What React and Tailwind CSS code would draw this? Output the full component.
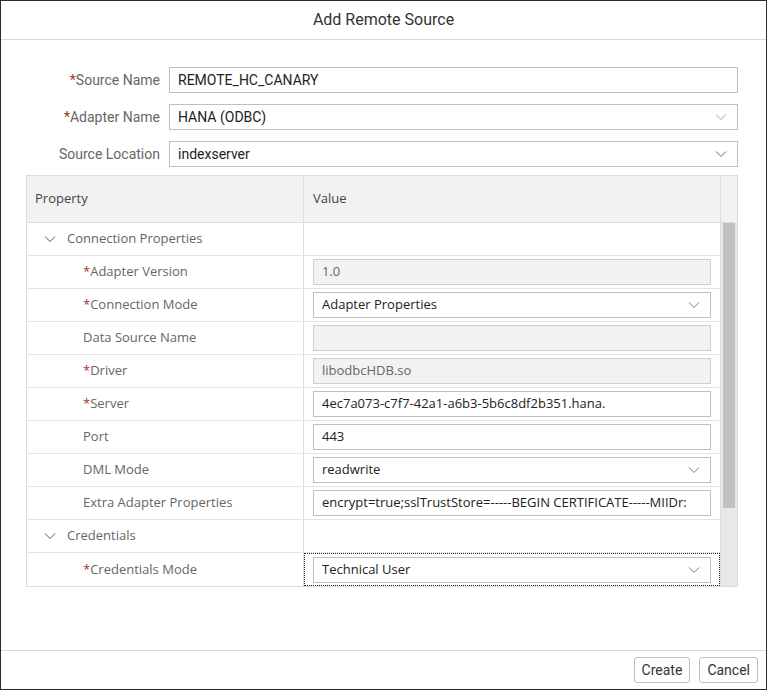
import React from "react";

const Chevron = ({ className = "" }) => (
  <svg width="12" height="8" viewBox="0 0 12 8" className={className}>
    <path d="M1 1.5 L6 6.5 L11 1.5" fill="none" stroke="currentColor" strokeWidth="1" />
  </svg>
);

const Req = () => <span className="text-[#a5332f]">*</span>;

function FormRow({ label, required, value, select, chevColor }) {
  return (
    <div className="flex items-center h-[26px]">
      <div className="w-[143px] pr-[9px] text-right text-[14px] text-[#666] whitespace-nowrap">
        {required && <Req />}
        {label}
      </div>
      <div className="flex-1 h-[26px] border border-[#bfbfbf] bg-white flex items-center pl-[8px] pr-[10px] text-[14px] text-[#222]">
        <span className="flex-1">{value}</span>
        {select && <Chevron className={chevColor} />}
      </div>
    </div>
  );
}

function ValueInput({ value, disabled, select }) {
  return (
    <div
      className={
        "h-[26px] border flex items-center pl-[8px] pr-[10px] text-[13px] overflow-hidden whitespace-nowrap " +
        (disabled ? "bg-[#f2f2f2] border-[#cfcfcf] text-[#666]" : "bg-white border-[#bfbfbf] text-[#222]")
      }
    >
      <span className="flex-1 overflow-hidden">{value}</span>
      {select && <Chevron className="text-[#7a7d80] ml-2" />}
    </div>
  );
}

const rows = [
  { section: "Connection Properties" },
  { label: "Adapter Version", req: true, value: "1.0", disabled: true },
  { label: "Connection Mode", req: true, value: "Adapter Properties", select: true },
  { label: "Data Source Name", value: "", disabled: true },
  { label: "Driver", req: true, value: "libodbcHDB.so", disabled: true },
  { label: "Server", req: true, value: "4ec7a073-c7f7-42a1-a6b3-5b6c8df2b351.hana.\u2009" },
  { label: "Port", value: "443" },
  { label: "DML Mode", value: "readwrite", select: true },
  { label: "Extra Adapter Properties", value: "encrypt=true;sslTrustStore=-----BEGIN CERTIFICATE-----MIIDr:" },
  { section: "Credentials" },
  { label: "Credentials Mode", req: true, value: "Technical User", select: true, focus: true },
];

export default function App() {
  return (
    <div
      className="w-[767px] h-[690px] border border-[#2b2b2b] bg-white flex flex-col"
      style={{ fontFamily: "Roboto, 'Liberation Sans', sans-serif" }}
    >
      <div className="h-[39px] border-b border-[#d9d9d9] flex items-center justify-center text-[16px] text-[#333] shrink-0">
        Add Remote Source
      </div>
      <div className="flex-1 pl-[25px] pr-[28px] pt-[27px]">
        <div className="flex flex-col gap-[11px]">
          <FormRow label="Source Name" required value="REMOTE_HC_CANARY" />
          <FormRow label="Adapter Name" required value="HANA (ODBC)" select chevColor="text-[#a8a8a8]" />
          <FormRow label="Source Location" value="indexserver" select chevColor="text-[#6a6d70]" />
        </div>
        <div
          className="mt-[8px] border border-[#dcdcdc] flex"
          style={{ fontFamily: "'Open Sans', 'Liberation Sans', sans-serif" }}
        >
          <div className="flex-1">
            <div className="h-[47px] bg-[#f2f2f2] border-b border-[#dcdcdc] flex text-[13px] text-[#444]">
              <div className="w-[277px] border-r border-[#dcdcdc] flex items-center pl-[8px]">Property</div>
              <div className="flex-1 flex items-center pl-[9px]">Value</div>
            </div>
            {rows.map((r, i) => (
              <div key={i} className="h-[33px] border-b border-[#e5e5e5] last:border-b-0 flex text-[13px]">
                <div className="w-[277px] border-r border-[#dcdcdc] flex items-center text-[#666]">
                  {r.section ? (
                    <>
                      <Chevron className="text-[#3d5a80] ml-[17px] mr-[11px]" />
                      <span>{r.section}</span>
                    </>
                  ) : (
                    <span className="pl-[56px]">
                      {r.req && <Req />}
                      {r.label}
                    </span>
                  )}
                </div>
                <div
                  className={
                    "flex-1 flex items-center px-[9px] " +
                    (r.focus ? "outline outline-1 outline-dotted outline-[#222] -outline-offset-1" : "")
                  }
                >
                  {!r.section && (
                    <div className="flex-1">
                      <ValueInput value={r.value} disabled={r.disabled} select={r.select} />
                    </div>
                  )}
                </div>
              </div>
            ))}
          </div>
          <div className="w-[17px] bg-[#f2f2f2] border-l border-[#dcdcdc] flex flex-col">
            <div className="h-[47px] border-b border-[#dcdcdc]"></div>
            <div className="flex-1 bg-[#e8e8e8] pt-0 px-[2px]">
              <div className="h-[285px] bg-[#c1c1c1]"></div>
            </div>
          </div>
        </div>
      </div>
      <div className="h-[39px] border-t border-[#d9d9d9] flex items-center justify-end gap-[9px] pr-[8px] shrink-0">
        <button className="h-[26px] px-[7px] border border-[#bfbfbf] rounded-[3px] bg-white text-[14px] text-[#333]">
          Create
        </button>
        <button className="h-[26px] px-[7px] border border-[#bfbfbf] rounded-[3px] bg-white text-[14px] text-[#333]">
          Cancel
        </button>
      </div>
    </div>
  );
}
